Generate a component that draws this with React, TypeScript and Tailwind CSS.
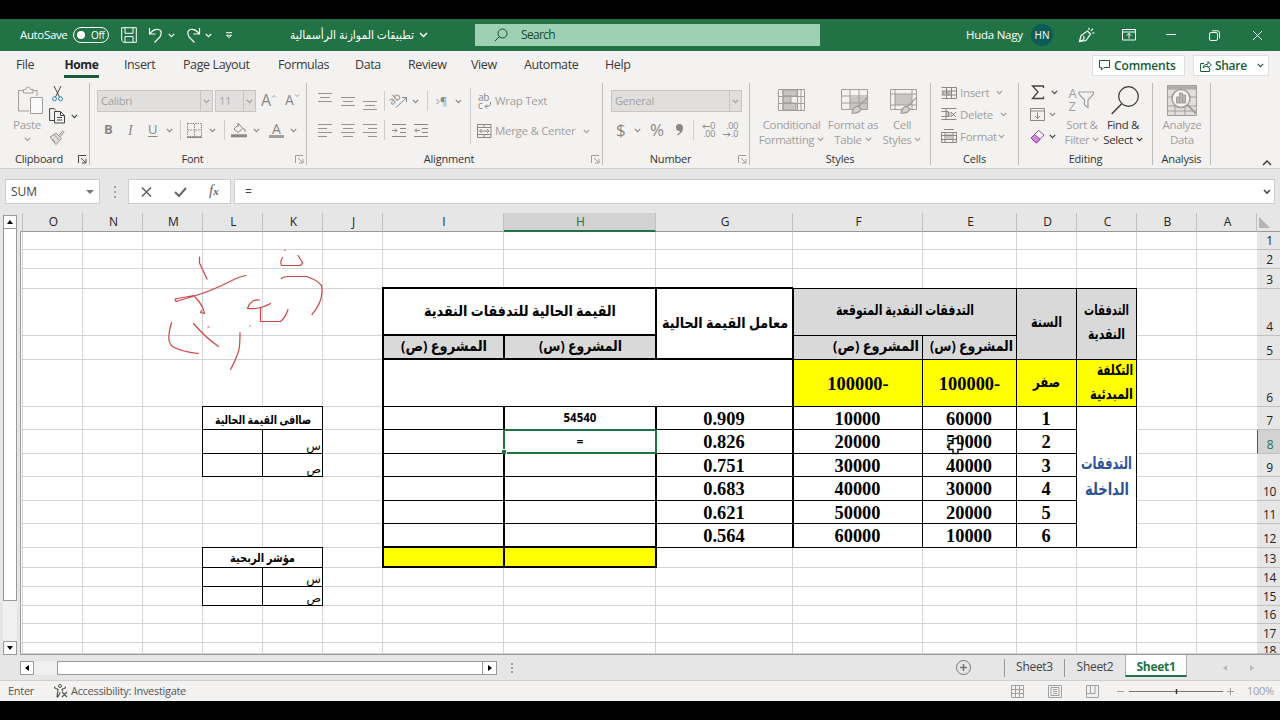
import type { ReactNode } from 'react'
import clsx from 'clsx'

// ── Sheet data ────────────────────────────────────────────────────────────────

const COLUMNS = ['', 'O', 'N', 'M', 'L', 'K', 'J', 'I', 'H', 'G', 'F', 'E', 'D', 'C', 'B', 'A']
const ROWS = Array.from({ length: 18 }, (_, i) => i + 1)

type SheetCell = {
  col: string
  row: number
  cols?: number
  rows?: number
  text?: ReactNode
  className?: string
}

const HEAD = 'bg-[#d9d9d9] font-bold text-[15px]'
const SERIF = "font-['Liberation_Serif',serif] text-[18.4px] font-bold pt-[1px]"
const SMALL = 'bg-white items-end! justify-end! pr-[1px] text-[12px] leading-[15px]'
const YELLOW = 'bg-[#ffff00]'

const FLOWS = [
  { year: 1, e: '60000', f: '10000', g: '0.909' },
  { year: 2, e: '50000', f: '20000', g: '0.826' },
  { year: 3, e: '40000', f: '30000', g: '0.751' },
  { year: 4, e: '30000', f: '40000', g: '0.683' },
  { year: 5, e: '20000', f: '50000', g: '0.621' },
  { year: 6, e: '10000', f: '60000', g: '0.564' },
]

const CELLS: SheetCell[] = [
  { col: 'F', row: 4, cols: 2, text: <Ar w={138}>التدفقات النقدية المتوقعة</Ar>, className: clsx(HEAD, 'border-l-2 pb-[2px]') },
  { col: 'D', row: 4, rows: 2, text: <Ar w={31}>السنة</Ar>, className: clsx(HEAD, 'pb-[2px]') },
  {
    col: 'C',
    row: 4,
    rows: 2,
    text: (
      <div className="flex flex-col items-center">
        <Ar w={45}>التدفقات</Ar>
        <Ar w={37}>النقدية</Ar>
      </div>
    ),
    className: clsx(HEAD, 'pb-[2px]'),
  },
  { col: 'E', row: 5, text: <Ar w={83}>المشروع (س)</Ar>, className: clsx(HEAD, 'justify-end! pr-[3px] pb-[1px]') },
  { col: 'F', row: 5, text: <Ar w={86}>المشروع (ص)</Ar>, className: clsx(HEAD, 'justify-end! border-l-2 pr-[3px] pb-[1px]') },
  {
    col: 'C',
    row: 6,
    text: (
      <div className="flex flex-col items-end">
        <Ar w={36}>التكلفة</Ar>
        <Ar w={43}>المبدئية</Ar>
      </div>
    ),
    className: clsx(YELLOW, 'justify-end! pr-[3px] text-[15px] font-bold'),
  },
  { col: 'D', row: 6, text: <Ar w={27}>صفر</Ar>, className: clsx(YELLOW, 'text-[15px] font-bold') },
  { col: 'E', row: 6, text: '100000-', className: clsx(YELLOW, SERIF) },
  { col: 'F', row: 6, text: '100000-', className: clsx(YELLOW, SERIF, 'border-l-2') },
  {
    col: 'C',
    row: 7,
    rows: 6,
    text: (
      <div className="flex flex-col items-center gap-[2px]">
        <Ar w={51}>التدفقات</Ar>
        <Ar w={44}>الداخلة</Ar>
      </div>
    ),
    className: 'bg-white pt-[1px] text-[17px] font-bold text-[#2f5496]!',
  },
  ...FLOWS.flatMap((r): SheetCell[] => [
    { col: 'D', row: r.year + 6, text: r.year, className: clsx('bg-white', SERIF, 'pr-[1px]') },
    { col: 'E', row: r.year + 6, text: r.e, className: clsx('bg-white', SERIF, 'pr-[1px]') },
    { col: 'F', row: r.year + 6, text: r.f, className: clsx('bg-white', SERIF, 'border-l-2 pr-[1px]') },
    { col: 'G', row: r.year + 6, text: r.g, className: clsx('bg-white', SERIF, 'border-l-2 pr-[1px]') },
    {
      col: 'H',
      row: r.year + 6,
      text: r.year === 1 ? '54540' : r.year === 2 ? '=' : '',
      className: "border-l-2 bg-white font-['Noto_Sans',sans-serif] text-[11.5px] font-bold",
    },
    { col: 'I', row: r.year + 6, className: 'border-l-2 bg-white' },
  ]),
  {
    col: 'G',
    row: 4,
    rows: 2,
    text: <Ar w={126}>معامل القيمة الحالية</Ar>,
    className: '-mt-[2px]! border-t-2 border-b-2 border-l-2 bg-white text-[15px] font-bold',
  },
  {
    col: 'I',
    row: 4,
    cols: 2,
    text: <Ar w={192}>القيمة الحالية للتدفقات النقدية</Ar>,
    className: '-mt-[2px]! border-t-2 border-b-2 border-l-2 bg-white text-[15px] font-bold',
  },
  { col: 'H', row: 5, text: <Ar w={83}>المشروع (س)</Ar>, className: clsx(HEAD, 'border-b-2 border-l-2') },
  { col: 'I', row: 5, text: <Ar w={86}>المشروع (ص)</Ar>, className: clsx(HEAD, 'border-b-2 border-l-2') },
  { col: 'I', row: 6, cols: 3, className: 'border-l-2 bg-white' },
  { col: 'H', row: 13, className: clsx(YELLOW, '-mt-[2px]! -mr-px border-2') },
  { col: 'I', row: 13, className: clsx(YELLOW, '-mt-[2px]! border-y-2 border-l-2') },
  {
    col: 'L',
    row: 7,
    cols: 2,
    text: <Ar w={96}>صاافى القيمة الحالية</Ar>,
    className: 'bg-white pt-1 text-[12px] font-bold',
  },
  { col: 'L', row: 8, className: 'bg-white' },
  { col: 'K', row: 8, text: 'س', className: SMALL },
  { col: 'L', row: 9, className: 'bg-white' },
  { col: 'K', row: 9, text: 'ص', className: SMALL },
  {
    col: 'L',
    row: 13,
    cols: 2,
    text: <Ar w={65}>مؤشر الربحية</Ar>,
    className: 'bg-white text-[12px] font-bold',
  },
  { col: 'L', row: 14, className: 'bg-white' },
  { col: 'K', row: 14, text: 'س', className: SMALL },
  { col: 'L', row: 15, className: 'bg-white' },
  { col: 'K', row: 15, text: 'ص', className: SMALL },
]

// Arabic label with a fixed rendered width.
function Ar({ w, children }: { w: number; children: string }) {
  return (
    <svg width={w} height="24" className="block shrink-0 overflow-visible">
      <text
        x={w / 2}
        y="16"
        textAnchor="middle"
        textLength={w}
        lengthAdjust="spacingAndGlyphs"
        direction="rtl"
        fill="currentColor"
      >
        {children}
      </text>
    </svg>
  )
}

// ── Small pieces ──────────────────────────────────────────────────────────────

function Chevron({ className }: { className?: string }) {
  return (
    <svg viewBox="0 0 7 5" className={clsx('h-[5px] w-[7px] shrink-0', className)} fill="none" stroke="currentColor" strokeWidth="1.2">
      <path d="M.8.9 3.5 3.6 6.2.9" />
    </svg>
  )
}

function Icon({ w, h, className, children }: { w: number; h: number; className?: string; children: ReactNode }) {
  return (
    <svg
      width={w}
      height={h}
      viewBox={`0 0 ${w} ${h}`}
      fill="none"
      stroke="currentColor"
      className={clsx('shrink-0', className)}
    >
      {children}
    </svg>
  )
}

function VLine({ className = 'h-5' }: { className?: string }) {
  return <div className={clsx('w-px shrink-0 bg-[#d0cecc]', className)} />
}

function Launcher({ className }: { className?: string }) {
  return (
    <Icon w={9} h={9} className={className}>
      <path d="M.5 8V.5H8M3 3l4.500 4.500M8 4v4H4" />
    </Icon>
  )
}

function Group({
  label,
  className,
  launcher,
  children,
}: {
  label: string
  className: string
  launcher?: string
  children: ReactNode
}) {
  return (
    <div className={clsx('flex h-[82px] shrink-0 flex-col border-r border-[#bdbbb9]', className)}>
      <div className="flex h-[72px]">{children}</div>
      <div className="flex h-3 items-center">
        <div
          className={clsx(
            'flex-1 text-center text-[11px] leading-3 tracking-[-0.2px] text-[#333]',
            launcher && '-mr-[14px] pr-[14px]',
          )}
        >
          {label}
        </div>
        {launcher && <Launcher className={clsx('mr-[2px]', launcher)} />}
      </div>
    </div>
  )
}

function BigButton({ className, icon, lines, chevron }: { className: string; icon: ReactNode; lines: string[]; chevron?: boolean }) {
  return (
    <div className={clsx('flex shrink-0 flex-col items-center text-[11.5px] leading-[15px] tracking-[-0.35px] whitespace-nowrap', className)}>
      <div className="flex h-[34px] items-center justify-center">{icon}</div>
      <div>{lines[0]}</div>
      <div className="flex items-center gap-[3px]">
        {lines[1]}
        {chevron && <Chevron />}
      </div>
    </div>
  )
}

function AlignLines({ widths, className }: { widths: number[]; className?: string }) {
  return (
    <div className={clsx('flex w-[14px] shrink-0 flex-col gap-[3px]', className)}>
      {widths.map((w, i) => (
        <div key={i} className="h-px bg-[#979593]" style={{ width: w }} />
      ))}
    </div>
  )
}

function Combo({ text, className }: { text: string; className: string }) {
  return (
    <div
      className={clsx(
        'flex h-[22px] shrink-0 items-center border border-[#c8c6c4] bg-[#e1dfdd] text-[11px] tracking-[-0.2px]',
        className,
      )}
    >
      <span className="flex-1 pl-[3px]">{text}</span>
      <span className="flex h-full w-3 items-center justify-center border-l border-[#c8c6c4]">
        <Chevron />
      </span>
    </div>
  )
}

const brush = <path d="M27 8 17 18M17 17q-5 1-6 7 7 1 9-4Z" fill="#d2d0ce" strokeWidth="1.300" />

// ── Title bar ─────────────────────────────────────────────────────────────────

function TitleBar() {
  return (
    <div className="flex h-8 shrink-0 items-center bg-[#217346] text-[11.5px] whitespace-nowrap text-white">
      <span className="ml-5 w-[53px] text-[11.5px] tracking-[-0.35px]">AutoSave</span>
      <div className="flex h-4 w-9 items-center rounded-full border border-white pl-[3px]">
        <span className="size-2 rounded-full bg-white" />
        <span className="ml-[6px] text-[10px] tracking-[-0.3px]">Off</span>
      </div>
      <Icon w={16} h={16} className="ml-3">
        <path d="M.7.7h14.600v14.600H2.500L.7 13.500ZM4 .7v5.600h8V.7M4 15V9.500h8V15" />
      </Icon>
      <Icon w={16} h={16} className="ml-[11px]">
        <path d="M1.500 1v6h6M2 6.500Q6 1.500 10.500 2.500T12 10l-5.500 5.500" strokeWidth="1.200" />
      </Icon>
      <Chevron className="ml-[4px]" />
      <Icon w={16} h={16} className="ml-[10px]">
        <path d="M14.500 1v6h-6M14 6.500Q10 1.500 5.500 2.500T4 10l5.500 5.500" strokeWidth="1.200" />
      </Icon>
      <Chevron className="ml-[4px]" />
      <Icon w={8} h={7} className="ml-[13px]">
        <path d="M1 .7h6M1.500 3.300 4 5.600l2.500-2.300Z" />
      </Icon>
      <div className="ml-[57px] flex w-[125px] text-[11.500px]">
        <Ar w={124}>تطبيقات الموازنة الرأسمالية</Ar>
      </div>
      <Icon w={9} h={6} className="ml-1">
        <path d="m1 1 3.500 3.500L8 1" strokeWidth="1.500" />
      </Icon>
      <div className="ml-[47px] flex h-[22px] w-[345px] items-center bg-[#9fd0b3] text-[#17492d]">
        <Icon w={14} h={14} className="ml-[19px]">
          <circle cx="8.500" cy="5.500" r="4.500" />
          <path d="M5.200 8.700.7 13.300" />
        </Icon>
        <span className="ml-[13px] text-[12px] tracking-[-0.7px]">Search</span>
      </div>
      <span className="ml-[146px] w-[65px] tracking-[-0.25px]">Huda Nagy</span>
      <span className="flex size-[22px] items-center justify-center rounded-full bg-[#0b5c59] text-[10px]">HN</span>
      <Icon w={17} h={16} className="ml-[25px]">
        <path d="m1.500 14.500 1.500-6L9.500 4l3 3L8 13.500ZM2 14q5.500-1 3.500-5M11 3V.8M13 4l2-2.500M14 6h2.500" strokeWidth="1.200" />
      </Icon>
      <Icon w={14} h={12} className="ml-[27px]">
        <path d="M.5.500h13v10.500H.5ZM.5 3h13M7 9.500V4.500M4.800 6.500 7 4.300l2.200 2.200" />
      </Icon>
      <Icon w={10} h={2} className="ml-[30px]">
        <path d="M0 .5h10" />
      </Icon>
      <Icon w={11} h={11} className="ml-[33px]">
        <rect x=".5" y="2.500" width="8" height="8" rx="1.500" />
        <path d="M3 .8h5.500q2 0 2 2V8.500" />
      </Icon>
      <Icon w={11} h={11} className="ml-[32px]">
        <path d="m1 1 9 9M10 1l-9 9" />
      </Icon>
    </div>
  )
}

// ── Ribbon ────────────────────────────────────────────────────────────────────

const TABS = [
  { name: 'File', className: 'w-12' },
  { name: 'Home', className: 'w-[60px]' },
  { name: 'Insert', className: 'w-[59px]' },
  { name: 'Page Layout', className: 'w-[95px]' },
  { name: 'Formulas', className: 'w-[77px]' },
  { name: 'Data', className: 'w-[53px]' },
  { name: 'Review', className: 'w-[63px]' },
  { name: 'View', className: 'w-[53px]' },
  { name: 'Automate', className: 'w-[81px]' },
  { name: 'Help', className: 'w-10' },
]

function TabRow() {
  return (
    <div className="flex h-[29px] items-center pl-4 text-[12.5px] tracking-[-0.4px] whitespace-nowrap text-[#3b3a39]">
      {TABS.map((t) => (
        <div key={t.name} className={clsx('shrink-0', t.className)}>
          {t.name === 'Home' ? (
            <div className="mt-[1px] flex h-[24px] w-[35px] items-center justify-center border-b-[3px] border-[#185c37] text-[12px] font-bold text-[#222]">
              Home
            </div>
          ) : (
            t.name
          )}
        </div>
      ))}
      <div className="ml-[447px] flex h-[21px] w-[93px] shrink-0 items-center border border-[#e1dfdd] bg-white pl-[6px] font-semibold text-[#185c37]">
        <Icon w={11} h={11}>
          <path d="M.5.5h10v7H5L2.500 10V7.500h-2Z" />
        </Icon>
        <span className="ml-1 text-[12px] tracking-[-0.15px]">Comments</span>
      </div>
      <div className="ml-[8px] flex h-[21px] w-[76px] shrink-0 items-center border border-[#e1dfdd] bg-white pl-[6px] font-semibold text-[#185c37]">
        <Icon w={12} h={12}>
          <path d="M4 3.500H.6v8h9V8M3 8q.5-4 5-4V1.500L11.300 5 8 8V6Q5 6 3 8Z" />
        </Icon>
        <span className="ml-[3px] w-[42px] text-[12px] tracking-[-0.3px]">Share</span>
        <Chevron />
      </div>
    </div>
  )
}

function ClipboardGroup() {
  return (
    <Group label="Clipboard" className="w-[90px]" launcher="text-[#444]">
      <div className="flex w-[45px] flex-col items-center pl-[9px] text-[#a19f9d]">
        <Icon w={26} h={30} className="mt-[3px] ml-[5px]">
          <path d="M12 25H1.500V4.500h5M16 4.500h4V10M6.500 7V3.500h2.200Q9.500 1 11.200 1t2.500 2.500H16V7Z" />
          <path d="M13.500 11.500h12v16h-12Z" fill="#fafafa" />
        </Icon>
        <span className="mt-[1px] text-[11.500px] leading-4 tracking-[-0.3px]">Paste</span>
        <Chevron className="mt-1" />
      </div>
      <div className="ml-1 flex flex-col text-[#444]">
        <Icon w={11} h={16} className="mt-[3px] ml-[3px]">
          <path d="M2 0l5.500 11M9 0 3.500 11" />
          <circle cx="2.500" cy="12.800" r="2" stroke="#2b88b8" />
          <circle cx="8.500" cy="12.800" r="2" stroke="#2b88b8" />
        </Icon>
        <div className="mt-[6px] flex items-center">
          <Icon w={17} h={16}>
            <path d="M5 12.500H.6V.6h4.600L7 2.500M5.500 3.500h6l4 4v7.500h-10ZM11.500 3.500v4h4M8 9.500h5M8 12h5" />
          </Icon>
          <Chevron className="ml-[5px]" />
        </div>
        <Icon w={16} h={15} className="mt-[6px] text-[#979593]">
          <path d="m1 7 4-2.500 5.500 6L7 14.500ZM5 4.500l2-1.500 5.500 5.500-2 2M10 5.500 13.500.8l1.500 1.500-4 4.500M3 9l3 3" fill="#e1dfdd" />
        </Icon>
      </div>
    </Group>
  )
}

function FontGroup() {
  return (
    <Group label="Font" className="w-[217px]" launcher="text-[#a19f9d]">
      <div className="flex flex-col pt-[7px] pl-[7px] text-[#a19f9d]">
        <div className="flex h-[22px] items-center">
          <Combo text="Calibri" className="w-[116px]" />
          <Combo text="11" className="ml-[2px] w-[41px]" />
          <span className="mb-[3px] ml-[5px] w-[10px] text-[16px] leading-5 text-[#8a8886]">A</span>
          <Icon w={6} h={4} className="mb-[10px]">
            <path d="m1 3.500 2-2 2 2" />
          </Icon>
          <span className="mb-[2px] ml-[8px] w-[9px] text-[14px] leading-5 text-[#8a8886]">A</span>
          <Icon w={6} h={4} className="mb-[10px]">
            <path d="m1 .5 2 2 2-2" />
          </Icon>
        </div>
        <div className="mt-[7px] flex h-[22px] items-center text-[13px] text-[#8a8886]">
          <span className="ml-[7px] w-6 font-bold">B</span>
          <span className="w-5 font-['Liberation_Serif',serif] text-[14px] italic">I</span>
          <span className="w-[18px] underline underline-offset-2">U</span>
          <Chevron />
          <VLine className="ml-[7px] h-5" />
          <Icon w={15} h={15} className="ml-[6px]">
            <path d="M.5.500h14v13H.5ZM7.500 1v12M1 7h13" strokeDasharray="1.500 1" />
            <path d="M0 14.300h15" strokeWidth="1.400" />
          </Icon>
          <Chevron className="ml-[7px]" />
          <VLine className="ml-2 h-5" />
          <Icon w={16} h={16} className="ml-[6px]">
            <path d="m3 7 5-5 4 4.500-5 4ZM7 1v4M12.500 6q2.500 2 1.500 4" />
            <path d="M0 13.800h16" strokeWidth="3" />
          </Icon>
          <Chevron className="ml-[6px]" />
          <div className="ml-[9px] flex w-[15px] flex-col items-center">
            <span className="text-[14px] leading-[13px]">A</span>
            <span className="h-[3px] w-[15px] bg-[#a19f9d]" />
          </div>
          <Chevron className="ml-[6px]" />
        </div>
      </div>
    </Group>
  )
}

function AlignmentGroup() {
  return (
    <Group label="Alignment" className="w-[296px]" launcher="text-[#a19f9d]">
      <div className="flex flex-col pt-[7px] pl-[11px] text-[#8a8886]">
        <div className="flex h-[22px] items-center">
          <AlignLines widths={[14, 10, 14]} className="mb-2 items-center" />
          <AlignLines widths={[14, 10, 14]} className="ml-[9px] items-center" />
          <AlignLines widths={[14, 10, 14]} className="mt-2 ml-[8px] items-center" />
          <VLine className="ml-[7px] h-5" />
          <Icon w={17} h={16} className="ml-[6px] overflow-visible">
            <text x="-1" y="9" fontSize="10.500" fill="currentColor" stroke="none" transform="rotate(-40 5 8)">
              ab
            </text>
            <path d="M5 14.500 15 5M11 4.500h4.500V9" />
          </Icon>
          <Chevron className="ml-[4px]" />
          <VLine className="ml-[8px] h-5" />
          <span className="ml-[8px] flex w-[13px] items-center text-[11px]">
            <Icon w={4} h={7}>
              <path d="m.5 1 2.500 2.500L.5 6" />
            </Icon>
            ¶
          </span>
          <Chevron className="ml-[6px]" />
        </div>
        <div className="mt-[7px] flex h-[22px] items-center">
          <AlignLines widths={[14, 9, 14, 9]} />
          <AlignLines widths={[14, 10, 14, 10]} className="ml-[9px] items-center" />
          <AlignLines widths={[14, 9, 14, 9]} className="ml-[8px] items-end" />
          <VLine className="ml-[7px] h-5" />
          <Icon w={14} h={13} className="ml-[7px]">
            <path d="M0 .5h14M8 4.500h6M8 8.500h6M0 12.500h14M0 6.500h5M3 4.500l2 2-2 2" />
          </Icon>
          <Icon w={14} h={13} className="ml-[8px]">
            <path d="M0 .5h14M8 4.500h6M8 8.500h6M0 12.500h14M1 6.500h5M3 4.500l-2 2 2 2" />
          </Icon>
        </div>
      </div>
      <VLine className="mt-[5px] ml-[8px] h-[56px]" />
      <div className="ml-[6px] flex flex-col pt-[7px] text-[11.500px] tracking-[-0.3px] whitespace-nowrap text-[#a19f9d]">
        <div className="flex h-[22px] items-center">
          <div className="ml-[1px] flex w-[17px] flex-col text-[10px] leading-[8px] text-[#8a8886]">
            <span>ab</span>
            <span className="flex items-center">
              c
              <Icon w={8} h={7} className="ml-px">
                <path d="M6.500 0v2.500q0 2-5 2M3 2.500l-2 2 2 2" />
              </Icon>
            </span>
          </div>
          <span>Wrap Text</span>
        </div>
        <div className="mt-[8px] flex h-[22px] items-center">
          <Icon w={15} h={14} className="text-[#8a8886]">
            <path d="M.5.500h13.500v13H.5ZM.5 3.500H14M.5 10.500H14M7 .5v3M7 10.500v3M2.500 7H12M4.500 5 2.500 7l2 2M10 5l2 2-2 2" />
          </Icon>
          <span className="ml-[3px] w-[88px]">Merge &amp; Center</span>
          <Chevron />
        </div>
      </div>
    </Group>
  )
}

function NumberGroup() {
  return (
    <Group label="Number" className="w-[147px]" launcher="text-[#a19f9d]">
      <div className="flex flex-col pt-[7px] pl-[8px] text-[#a19f9d]">
        <Combo text="General" className="w-[131px]" />
        <div className="mt-[7px] flex h-[22px] items-center text-[17px] text-[#8a8886]">
          <span className="ml-[5px] w-[18px]">$</span>
          <Chevron />
          <span className="ml-[9px] w-[25px]">%</span>
          <svg width="9" height="12" viewBox="0 0 9 12" className="shrink-0" fill="currentColor">
            <path d="M4 0a3.600 3.600 0 0 1 4 4q0 5-5.500 7.500L2 10.500Q5 9 5 7A3.500 3.500 0 1 1 4 0" />
          </svg>
          <VLine className="ml-[9px] h-5" />
          <div className="ml-[6px] flex w-[15px] flex-col items-end text-[9px] leading-[8px] tracking-[-0.3px]">
            <span className="flex items-center">
              <Icon w={8} h={5}>
                <path d="M1 2.500h7M3 .5l-2 2 2 2" />
              </Icon>
              0
            </span>
            <span>.00</span>
          </div>
          <div className="ml-[7px] flex w-[16px] flex-col items-end text-[9px] leading-[8px] tracking-[-0.3px]">
            <span>.00</span>
            <span className="flex items-center">
              <Icon w={8} h={5}>
                <path d="M0 2.500h7M5 .5l2 2-2 2" />
              </Icon>
              .0
            </span>
          </div>
        </div>
      </div>
    </Group>
  )
}

function StylesGroup() {
  return (
    <Group label="Styles" className="w-[181px]">
      <div className="flex text-[#a19f9d]">
        <BigButton
          className="ml-[5px] w-[73px]"
          lines={['Conditional', 'Formatting']}
          chevron
          icon={
            <Icon w={27} h={22}>
              <path d="M5 1h14v6H5ZM5 7h8v7H5ZM5 14h13v7H5Z" fill="#c8c6c4" />
              <path d="M.5.500h26v21H.5ZM.5 7.500h26M.5 14.500h26M5 .5v21M19.500.500v21M23 .5v21" />
            </Icon>
          }
        />
        <BigButton
          className="w-[50px]"
          lines={['Format as', 'Table']}
          chevron
          icon={
            <Icon w={29} h={26} className="mt-1 ml-1">
              <path d="M9 8h17v13H9Z" fill="#c8c6c4" stroke="none" />
              <path d="M.5.500h26v20H.5ZM.5 7h26M.5 14h26M9 .5v20M18 .5v20" />
              {brush}
            </Icon>
          }
        />
        <BigButton
          className="w-[48px]"
          lines={['Cell', 'Styles']}
          chevron
          icon={
            <Icon w={29} h={26} className="mt-1 ml-1">
              <path d="M5 5h17v11H5Z" fill="#c8c6c4" stroke="none" />
              <path d="M.5.500h26v20H.5ZM.5 5h26M.5 16h26M5 .5v20M22 .5v20" />
              {brush}
            </Icon>
          }
        />
      </div>
    </Group>
  )
}

function CellsGroup() {
  const items = [
    { name: 'Insert', w: 'w-[36px]', path: 'M.5 1.500h15v11H.5M.5 5h15M.5 9h15M5.500 1.500v11M10.500 1.500v11M8 7H1M3.500 5 1 7l2.500 2' },
    { name: 'Delete', w: 'w-[40px]', path: 'M.5 1.500h15M.5 12.500h15M.5 4.500h7v5h-7M5 1.500v11M10 5l5 5M15 5l-5 5' },
    { name: 'Format', w: 'w-[38px]', path: 'M3 .500h10M.5 3.500h15v10H.5ZM4 3.500v10M12 3.500v10M.5 6.500h15M.5 10.500h15' },
  ]
  return (
    <Group label="Cells" className="w-[88px]">
      <div className="-mt-px flex flex-col pl-[10px] text-[11.500px] tracking-[-0.3px] text-[#a19f9d]">
        {items.map((i) => (
          <div key={i.name} className="flex h-[21.670px] items-center">
            <Icon w={16} h={14} className="text-[#8a8886]">
              <path d="M5 5h6v5H5Z" fill="#c8c6c4" stroke="none" />
              <path d={i.path} />
            </Icon>
            <span className={clsx('ml-[3px]', i.w)}>{i.name}</span>
            <Chevron />
          </div>
        ))}
      </div>
    </Group>
  )
}

function EditingGroup() {
  return (
    <Group label="Editing" className="w-[134px]">
      <div className="-mt-px flex flex-col pl-[11px] text-[#444]">
        <div className="flex h-[21px] items-center">
          <Icon w={14} h={15} className="ml-[1px]">
            <path d="M12.500 3V1H1.500l5.500 6-5.500 6.500h11v-2" strokeWidth="1.300" />
          </Icon>
          <Chevron className="ml-[6px]" />
        </div>
        <div className="flex h-[22px] items-center text-[#8a8886]">
          <Icon w={15} h={13}>
            <path d="M.5.500h14v12H.5ZM.5 3h14M7.500 4.500v6M5 8l2.500 2.500L10 8" />
          </Icon>
          <Chevron className="ml-[4px]" />
        </div>
        <div className="flex h-[22px] items-center">
          <Icon w={15} h={15}>
            <path d="M1 9 8.500 1.500 14 6l-7.500 8Z" stroke="#9b3fa5" fill="#fff" />
            <path d="M1 9l3.500-3.500L10 10l-3.500 4Z" stroke="#9b3fa5" fill="#cf8ad6" />
          </Icon>
          <Chevron className="ml-[4px]" />
        </div>
      </div>
      <BigButton
        className="ml-[3px] w-[42px] text-[#a19f9d]"
        lines={['Sort &', 'Filter']}
        chevron
        icon={
          <div className="flex items-center">
            <div className="text-[13px] leading-[13px]">
              A<br />Z
            </div>
            <Icon w={17} h={18} className="ml-[2px]">
              <path d="M1 1h14.500v2L10 9v7.500L6.500 14V9L1 3Z" strokeWidth="1.200" />
            </Icon>
          </div>
        }
      />
      <BigButton
        className="w-[40px] text-[#333]"
        lines={['Find &', 'Select']}
        chevron
        icon={
          <Icon w={28} h={29} className="ml-1">
            <circle cx="17.500" cy="10.500" r="9.800" strokeWidth="1.200" />
            <path d="M10.500 18 .7 28" strokeWidth="1.300" />
          </Icon>
        }
      />
    </Group>
  )
}

function AnalysisGroup() {
  return (
    <Group label="Analysis" className="w-[58px]">
      <BigButton
        className="ml-[5px] w-[48px] text-[#a19f9d]"
        lines={['Analyze', 'Data']}
        icon={
          <Icon w={31} h={31}>
            <path d="M.5.500h29v30H.5Z" fill="#e1dfdd" />
            <path d="M.5 4h29M.5 21h29M.5 26h29M8 21v9M18 21v9M.5 12h29" />
            <path d="M.5.500h29V3H.5Z" fill="#b8b6b4" />
            <circle cx="14" cy="13.500" r="9" fill="#f3f2f1" strokeWidth="1.500" />
            <path d="M20.500 20 29 28.500" strokeWidth="2" />
            <path d="M9.500 12h3v6h-3ZM12.500 8h3v10h-3ZM15.500 10h3v8h-3Z" fill="#b8b6b4" />
          </Icon>
        }
      />
    </Group>
  )
}

function Ribbon() {
  return (
    <div className="h-[118px] shrink-0 border-b border-[#d2d0ce] bg-[#f3f2f1]">
      <TabRow />
      <div className="flex pt-[3px]">
        <ClipboardGroup />
        <FontGroup />
        <AlignmentGroup />
        <NumberGroup />
        <StylesGroup />
        <CellsGroup />
        <EditingGroup />
        <AnalysisGroup />
        <Icon w={10} h={6} className="mt-[77px] ml-[51px] text-[#333]">
          <path d="m1 5 4-4 4 4" strokeWidth="1.300" />
        </Icon>
      </div>
    </div>
  )
}

function FormulaBar() {
  return (
    <div className="flex h-[44px] shrink-0 pt-[10px] text-[12px] text-[#444]">
      <div className="ml-[5px] flex h-[25px] w-[95px] items-center border border-[#cfcfcf] bg-white">
        <span className="ml-[5px] flex-1 text-[12px]">SUM</span>
        <span className="mr-[5px] border-x-[4px] border-t-[4px] border-x-transparent border-t-[#777]" />
      </div>
      <div className="ml-[13px] flex h-[25px] w-[3px] flex-col items-center justify-center gap-[3px]">
        {[0, 1, 2].map((i) => (
          <span key={i} className="size-[2px] bg-[#a0a0a0]" />
        ))}
      </div>
      <div className="ml-[12px] flex h-[25px] w-[103px] items-center border border-[#cfcfcf] bg-white text-[#666]">
        <Icon w={11} h={10} className="ml-[12px]">
          <path d="m1 .5 9 9M10 .5l-9 9" strokeWidth="1.600" />
        </Icon>
        <Icon w={13} h={10} className="ml-[22px]">
          <path d="m1 5 4 4 7-8" strokeWidth="2" />
        </Icon>
        <span className="mb-[2px] ml-[22px] font-['Liberation_Serif',serif] text-[15px] leading-4 italic">
          f<span className="text-[11px] font-bold">x</span>
        </span>
      </div>
      <div className="ml-[3px] flex h-[25px] w-[1041px] items-center border border-[#cfcfcf] bg-white">
        <span className="ml-[10px] flex-1">=</span>
        <Icon w={8} h={6} className="mr-[3px]">
          <path d="m1 1 3 3 3-3" strokeWidth="1.600" />
        </Icon>
      </div>
    </div>
  )
}

// ── Sheet ─────────────────────────────────────────────────────────────────────

function VerticalScroll() {
  return (
    <div className="mt-[2px] mr-[3px] ml-[3px] flex w-[14px] shrink-0 flex-col bg-[#f0f0f0]">
      <div className="flex h-[14px] items-center justify-center border border-[#999] bg-white">
        <span className="border-x-[3.5px] border-b-[4px] border-x-transparent border-b-black" />
      </div>
      <div className="h-[372px] border border-t-0 border-[#999] bg-white" />
      <div className="flex-1" />
      <div className="flex h-[14px] items-center justify-center border border-[#999] bg-white">
        <span className="border-x-[3.5px] border-t-[4px] border-x-transparent border-t-black" />
      </div>
    </div>
  )
}

// Pen strokes drawn over the sheet, in window coordinates.
function Ink() {
  return (
    <svg
      className="pointer-events-none absolute top-[19px] left-0"
      width="1260"
      height="422"
      viewBox="20 232 1260 422"
      fill="none"
      stroke="#d0454a"
      strokeWidth="1.200"
      strokeLinecap="round"
      strokeLinejoin="round"
    >
      <path d="M199.500 257v6l7.500 16M246 275.500q-7 1-16 6-18 9-34 14l-20 6-1-2.500 19-3.500M195 297q8 8 9.500 16.500l-4-1 1-2" />
      <path d="M171.500 322.500c-4 14-3.500 20 1 24q8 5 26 7M193.500 323.500q12 14 25 23M208 327h1" />
      <path d="M240 332.500q0 15-1.500 19-4 11-8 18M250 325.500v.5" />
      <path d="M259.500 300c-6-1-10 3-12 8.500q13 1 23-5l-10 4.500v13.500h20q5-4 7.500-12" />
      <path d="M282.500 257.500c-2.500 4-2 8 0 8h17q2 0 3-3l-4.500-7M285 250v.5M281.500 278.500q2-2 7-2h18q10 3 15 9 3 14-9.500 29" />
      {/* Cell-select pointer */}
      <path
        d="M953 438.500h5v5h4v6h-4v4h-5v-4h-4v-6h4Z"
        stroke="#000"
        fill="#fff"
        strokeLinejoin="miter"
        strokeWidth="1.400"
      />
    </svg>
  )
}

function Sheet() {
  return (
    <div className="flex h-[442px] shrink-0">
      <VerticalScroll />
      <div className="relative grid h-[442px] grid-cols-[3px_60px_60px_60px_60px_60px_60px_121px_152px_137px_130px_94px_60px_60px_60px_60px_23px] grid-rows-[19px_18px_19px_20px_47px_24px_47px_23px_24px_23px_24px_23px_24px_20px_19px_19px_18px_19px_11px] overflow-hidden border-b border-[#999]">
        {COLUMNS.map((c, i) => (
          <div
            key={c || 'edge'}
            style={{ gridColumn: i + 1, gridRow: 1 }}
            className={clsx(
              'flex items-center justify-center border-r border-r-[#c0c0c0] pl-[2px] text-[12px] leading-4',
              c === 'H' ? 'border-b-2 border-b-[#217346] bg-[#d2d2d2] text-[#217346]' : 'border-b border-b-[#999] text-[#222]',
            )}
          >
            {c}
          </div>
        ))}
        <div className="col-start-17 row-start-1 flex items-center border-b border-[#999] pl-[2px]">
          <Icon w={11} h={11}>
            <path d="M0 0v11h11Z" fill="#b4b4b4" stroke="none" />
          </Icon>
        </div>
        {ROWS.map((r) => (
          <div
            key={r}
            style={{ gridColumn: 17, gridRow: r + 1 }}
            className={clsx(
              '-ml-px flex items-end justify-center overflow-hidden border-b border-b-[#c0c0c0] pl-[2px] text-[12px] leading-4 tracking-[-0.3px]',
              r === 8 ? 'border-l-2 border-l-[#217346] bg-[#d2d2d2] text-[#217346]' : 'border-l border-l-[#999] text-[#222]',
              r === 18 && 'items-start!',
            )}
          >
            {r}
          </div>
        ))}
        {ROWS.map((r) =>
          COLUMNS.map((c, i) => (
            <div
              key={`${c}${r}`}
              style={{ gridColumn: i + 1, gridRow: r + 1 }}
              className={clsx('border-b border-[#d4d4d4] bg-white', c !== 'A' && 'border-r', c === '' && 'border-l border-l-[#999]')}
            />
          )),
        )}
        {CELLS.map((c) => (
          <div
            key={c.col + c.row}
            style={{
              gridColumn: `${COLUMNS.indexOf(c.col) + 1} / span ${c.cols ?? 1}`,
              gridRow: `${c.row + 1} / span ${c.rows ?? 1}`,
            }}
            className={clsx(
              '-mt-px -ml-px flex min-h-0 min-w-0 items-center justify-center border border-black leading-5 whitespace-nowrap text-black',
              c.className,
            )}
          >
            {c.text}
          </div>
        ))}
        {/* Active cell */}
        <div className="relative col-start-9 row-start-9 -mt-px -mr-px -ml-px border-2 border-[#217346]">
          <span className="absolute -bottom-[2px] -left-[3px] size-[5px] border-t border-r border-white bg-[#217346]" />
        </div>
        <Ink />
      </div>
    </div>
  )
}

// ── Bottom bars ───────────────────────────────────────────────────────────────

function SheetTabs() {
  return (
    <div className="flex h-[26px] shrink-0 items-center border-b border-[#cfcfcf] text-[12px] tracking-[-0.3px] text-[#444]">
      <div className="ml-5 flex h-[14px] w-[477px] bg-[#f0f0f0]">
        <div className="flex w-[14px] items-center justify-center border border-[#999] bg-white">
          <span className="border-y-[3.5px] border-r-[4px] border-y-transparent border-r-black" />
        </div>
        <div className="ml-[23px] flex-1 border border-[#999] bg-white" />
        <div className="flex w-[14px] items-center justify-center border border-l-0 border-[#999] bg-white">
          <span className="border-y-[3.5px] border-l-[4px] border-y-transparent border-l-black" />
        </div>
      </div>
      <div className="ml-[13px] flex w-[3px] flex-col items-center gap-[2px]">
        {[0, 1, 2].map((i) => (
          <span key={i} className="size-[2px] bg-[#a0a0a0]" />
        ))}
      </div>
      <Icon w={15} h={15} className="ml-[443px] text-[#777]">
        <circle cx="7.500" cy="7.500" r="7" />
        <path d="M7.500 4v7M4 7.500h7" strokeWidth="1.600" />
      </Icon>
      <div className="ml-[33px] flex h-[18px] w-[60px] items-center justify-center border-l border-[#999] pb-[2px]">Sheet3</div>
      <div className="flex h-[18px] w-[61px] items-center justify-center border-l border-[#999] pb-[2px]">Sheet2</div>
      <div className="-mt-[4px] flex h-[23px] w-[62px] items-center justify-center border-x border-b-2 border-x-[#b0b0b0] border-b-[#217346] bg-white pt-[4px] font-bold text-[#217346]">
        Sheet1
      </div>
      <span className="ml-[36px] border-y-[3px] border-r-[4px] border-y-transparent border-r-[#b8b8b8]" />
      <span className="ml-[23px] border-y-[3px] border-l-[4px] border-y-transparent border-l-[#b8b8b8]" />
    </div>
  )
}

function StatusBar() {
  return (
    <div className="flex h-5 shrink-0 items-center bg-[#f3f2f1] text-[11px] tracking-[-0.3px] whitespace-nowrap text-[#555]">
      <span className="ml-[8px] w-[46px]">Enter</span>
      <Icon w={15} h={14}>
        <circle cx="6" cy="2" r="1.500" />
        <path d="M1 2.500q-1 1.500 1 2l2 .8L3 13M11 2.500q1 1.500-1 2l-2 .8.500 2M3 13q1 .5 3-4.500M8 8l5 5M13 8l-5 5" strokeWidth="1.200" />
      </Icon>
      <span className="ml-[2px] w-[940px]">Accessibility: Investigate</span>
      <Icon w={13} h={13} className="text-[#a0a0a0]">
        <path d="M.5.500h12v12H.5ZM4.500.500v12M8.500.500v12M.5 4.500h12M.5 8.500h12" />
      </Icon>
      <Icon w={14} h={13} className="ml-[24px] text-[#a0a0a0]">
        <path d="M.5.500h13v12H.5ZM3 2.500h8v8H3ZM5 4.500h4M5 6.500h4M5 8.500h4" />
      </Icon>
      <Icon w={13} h={13} className="ml-[24px] text-[#a0a0a0]">
        <path d="M.5.500h12v12H.5ZM4.500.500v8h4.500V.5M.5 8.500H4" />
      </Icon>
      <Icon w={7} h={7} className="ml-[18px] text-[#a0a0a0]">
        <path d="M0 3.500h7" />
      </Icon>
      <Icon w={94} h={7} className="ml-[5px] text-[#777]">
        <path d="M0 3.500h94" />
        <path d="M47.500 1v5" stroke="#333" strokeWidth="1.500" />
      </Icon>
      <Icon w={7} h={7} className="ml-[4px] text-[#a0a0a0]">
        <path d="M0 3.500h7M3.500 0v7" />
      </Icon>
      <span className="ml-[13px] text-[#a0a0a0]">100%</span>
    </div>
  )
}

export default function App() {
  return (
    <div className="flex h-[720px] w-[1280px] flex-col overflow-hidden bg-black pt-[19px] font-['Open_Sans','DejaVu_Sans',sans-serif]">
      <TitleBar />
      <div className="flex h-[650px] shrink-0 flex-col bg-[#e6e6e6]">
        <Ribbon />
        <FormulaBar />
        <Sheet />
        <SheetTabs />
        <StatusBar />
      </div>
    </div>
  )
}
